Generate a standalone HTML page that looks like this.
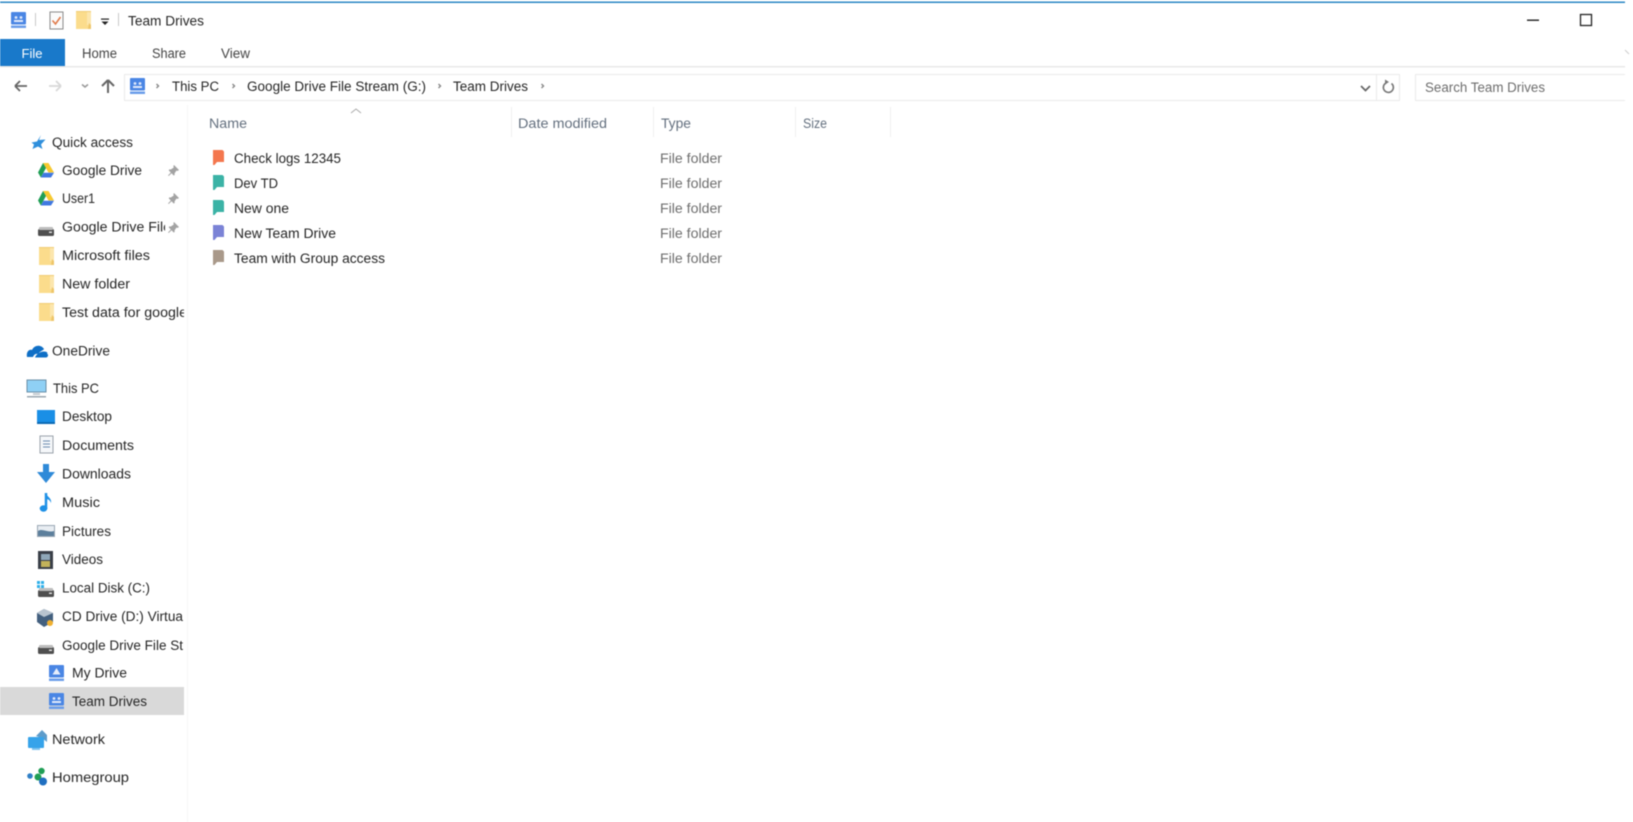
<!DOCTYPE html>
<html><head><meta charset="utf-8"><title>Team Drives</title>
<style>
html,body{margin:0;padding:0;background:#fff;width:1633px;height:822px;overflow:hidden}
svg{display:block;filter:blur(.45px)}
text{font-family:"Liberation Sans",sans-serif;font-size:13.5px;fill:#262626}
.h{fill:#64707f}.g{fill:#6e6e6e}.r{fill:#444}
</style></head><body>
<svg width="1633" height="822" viewBox="0 0 1633 822" xmlns="http://www.w3.org/2000/svg">
<defs>
<g id="td"><rect x="0" y="0" width="15" height="12.5" rx="1" fill="#4a86e4"/><rect x="0" y="13.5" width="15" height="2.5" fill="#6c9eea"/><circle cx="5" cy="5.5" r="1.4" fill="#dfe9fb"/><circle cx="10" cy="5.5" r="1.4" fill="#dfe9fb"/><rect x="3" y="8" width="9" height="2" fill="#dfe9fb"/></g>
<g id="md"><rect x="0" y="0" width="15" height="12.5" rx="1" fill="#4a86e4"/><rect x="0" y="13.5" width="15" height="2.5" fill="#6c9eea"/><path d="M7.5 3L11.5 9.5H3.5Z" fill="#e6eefc"/></g>
<g id="fd"><rect x="0" y="0" width="15" height="18" fill="#fbdc8c"/><path d="M11 0H13L15 2V14H11Z" fill="#fce6ad"/><path d="M13 12L15 14V18H12Z" fill="#eec66a"/><rect x="0" y="0" width="15" height="1" fill="#f0cd75"/></g>
<g id="gd"><path d="M5 0H10.500L16 9.500H10.500Z" fill="#f7c92f"/><path d="M5 0L0 9.500L2.800 14.500L8 5Z" fill="#1f9e55"/><path d="M5.500 9.800H16L13 14.500H2.800Z" fill="#3f78e0"/></g>
<g id="dr"><rect x="0" y="2" width="16" height="7" rx="1.500" fill="#4f4f4f"/><rect x="1" y="0" width="14" height="3" rx="1" fill="#bdbdbd"/><rect x="11" y="4.500" width="3" height="1.500" fill="#ddd"/></g>
<g id="pin"><path d="M6 0L11 5L9.500 6L8.500 5.500L6.500 8.500L6.700 10L5.600 10.500L3.600 8.200L0.700 11L0 10.500L2.800 7.500L0.800 5.500L1.200 4.400L2.800 4.500L5.800 2.500L5.300 1.300Z" fill="#a3a3a3"/></g>
<path id="bm" d="M0 0H9.500L11 1.500V12H4L1.500 15H0Z"/>
</defs>

<rect width="1633" height="822" fill="#fff"/>
<rect x="0" y="1.500" width="1625" height="1.500" fill="#2b87c4"/>

<!-- title bar -->
<use href="#td" x="11" y="12"/>
<rect x="35" y="13" width="1" height="13" fill="#c8c8c8"/>
<rect x="50" y="12" width="13" height="17" fill="#fbfbfb" stroke="#8a8a8a"/>
<path d="M52.500 20.500L55.500 24L60.500 17" fill="none" stroke="#e07a4a" stroke-width="1.600"/>
<use href="#fd" x="76" y="11"/>
<rect x="101" y="18.500" width="8" height="1.200" fill="#222"/>
<path d="M101.500 21.500H108.500L105 25Z" fill="#222"/>
<rect x="118" y="13" width="1" height="13" fill="#c8c8c8"/>
<text x="128" y="25.500" textLength="76" lengthAdjust="spacingAndGlyphs">Team Drives</text>
<rect x="1527" y="19.500" width="12" height="1.400" fill="#222"/>
<rect x="1580.500" y="14.500" width="11" height="11" fill="none" stroke="#222" stroke-width="1.300"/>
<path d="M1625 50L1629 54" stroke="#ccc"/>

<!-- ribbon -->
<rect x="0" y="39" width="65" height="27" fill="#1979ca"/>
<text x="21.500" y="58" textLength="21" lengthAdjust="spacingAndGlyphs" style="fill:#fff;font-size:13px">File</text>
<text x="82" y="58" textLength="35" lengthAdjust="spacingAndGlyphs" class="r">Home</text>
<text x="152" y="58" textLength="34" lengthAdjust="spacingAndGlyphs" class="r">Share</text>
<text x="221" y="58" textLength="29" lengthAdjust="spacingAndGlyphs" class="r">View</text>
<rect x="0" y="66" width="1625" height="1.500" fill="#e8e8e8"/>

<!-- nav -->
<path d="M15 86H27M15 86L20 81M15 86L20 91" fill="none" stroke="#666" stroke-width="1.800"/>
<path d="M49 86H61M61 86L56 81M61 86L56 91" fill="none" stroke="#d8d8d8" stroke-width="1.800"/>
<path d="M82 84.500L85 87L88 84.500" fill="none" stroke="#999" stroke-width="1.500"/>
<path d="M108 93V81M108 80L102 86M108 80L114 86" fill="none" stroke="#666" stroke-width="2"/>
<rect x="124.500" y="74.500" width="1275" height="26" fill="#fff" stroke="#ebebeb"/>
<use href="#td" x="130" y="78"/>
<path d="M156.500 84L158.500 86L156.500 88" fill="none" stroke="#888" stroke-width="1.400"/>
<text x="172" y="91" textLength="47" lengthAdjust="spacingAndGlyphs">This PC</text>
<path d="M232.500 84L234.500 86L232.500 88" fill="none" stroke="#888" stroke-width="1.400"/>
<text x="247" y="91" textLength="179" lengthAdjust="spacingAndGlyphs">Google Drive File Stream (G:)</text>
<path d="M438.500 84L440.500 86L438.500 88" fill="none" stroke="#888" stroke-width="1.400"/>
<text x="453" y="91" textLength="75" lengthAdjust="spacingAndGlyphs">Team Drives</text>
<path d="M541.500 84L543.500 86L541.500 88" fill="none" stroke="#888" stroke-width="1.400"/>
<path d="M1361 86L1365.500 90.500L1370 86" fill="none" stroke="#666" stroke-width="1.700"/>
<rect x="1376" y="75" width="1" height="25" fill="#ebebeb"/>
<path d="M1391.500 83.500A5 5 0 1 1 1386 83" fill="none" stroke="#777" stroke-width="1.600"/>
<path d="M1385 79.500V84.500L1389 82Z" fill="#777"/>
<path d="M1625 74.500H1415.500V100.500H1625" fill="#fff" stroke="#ebebeb"/>
<text x="1425" y="92" textLength="120" lengthAdjust="spacingAndGlyphs" class="g">Search Team Drives</text>

<!-- headers -->
<path d="M351 113L356 109L361 113" fill="none" stroke="#aaa"/>
<g fill="#f0f0f0"><rect x="187" y="107" width="1" height="30"/><rect x="511" y="107" width="1" height="30"/><rect x="653" y="107" width="1" height="30"/><rect x="795" y="107" width="1" height="30"/><rect x="890" y="107" width="1" height="30"/></g>
<text x="209" y="128" textLength="38" lengthAdjust="spacingAndGlyphs" class="h">Name</text>
<text x="518" y="128" textLength="89" lengthAdjust="spacingAndGlyphs" class="h">Date modified</text>
<text x="661" y="128" textLength="30" lengthAdjust="spacingAndGlyphs" class="h">Type</text>
<text x="803" y="128" style="font-size:14px" textLength="24" lengthAdjust="spacingAndGlyphs" class="h">Size</text>

<!-- files -->
<use href="#bm" x="213" y="150" fill="#f4774e"/>
<use href="#bm" x="213" y="175" fill="#3bb3a6"/>
<use href="#bm" x="213" y="200" fill="#3bb3a6"/>
<use href="#bm" x="213" y="225" fill="#7b83d6"/>
<use href="#bm" x="213" y="250" fill="#a9998a"/>
<text x="234" y="163" textLength="107" lengthAdjust="spacingAndGlyphs">Check logs 12345</text>
<text x="234" y="188" textLength="44" lengthAdjust="spacingAndGlyphs">Dev TD</text>
<text x="234" y="213" textLength="55" lengthAdjust="spacingAndGlyphs">New one</text>
<text x="234" y="238" textLength="102" lengthAdjust="spacingAndGlyphs">New Team Drive</text>
<text x="234" y="263" textLength="151" lengthAdjust="spacingAndGlyphs">Team with Group access</text>
<text x="660" y="163" textLength="62" lengthAdjust="spacingAndGlyphs" class="g">File folder</text>
<text x="660" y="188" textLength="62" lengthAdjust="spacingAndGlyphs" class="g">File folder</text>
<text x="660" y="213" textLength="62" lengthAdjust="spacingAndGlyphs" class="g">File folder</text>
<text x="660" y="238" textLength="62" lengthAdjust="spacingAndGlyphs" class="g">File folder</text>
<text x="660" y="263" textLength="62" lengthAdjust="spacingAndGlyphs" class="g">File folder</text>

<!-- sidebar -->
<rect x="187" y="105" width="1" height="717" fill="#f6f6f6"/>
<rect x="0" y="687" width="184" height="28" fill="#d9d9d9"/>

<path d="M41 135L39 140L45.500 139.500L41 144.500L42.500 149L38 146.500L32.500 149L34 144.500L31.500 142.500L37 141.500Z" fill="#2f8fdc"/>
<text x="52" y="147" textLength="81" lengthAdjust="spacingAndGlyphs">Quick access</text>

<use href="#gd" x="38" y="163"/>
<text x="62" y="175" textLength="80" lengthAdjust="spacingAndGlyphs">Google Drive</text>
<use href="#pin" x="168" y="165"/>
<use href="#gd" x="38" y="191"/>
<text x="62" y="203" style="font-size:14px" textLength="33" lengthAdjust="spacingAndGlyphs">User1</text>
<use href="#pin" x="168" y="193"/>
<use href="#dr" x="38" y="227"/>
<text x="62" y="231.500" textLength="109" lengthAdjust="spacingAndGlyphs">Google Drive File</text>
<rect x="165" y="218" width="20" height="18" fill="#fff"/>
<use href="#pin" x="168" y="222"/>
<use href="#fd" x="39" y="247"/>
<text x="62" y="260" textLength="88" lengthAdjust="spacingAndGlyphs">Microsoft files</text>
<use href="#fd" x="39" y="275"/>
<text x="62" y="288.500" textLength="68" lengthAdjust="spacingAndGlyphs">New folder</text>
<use href="#fd" x="39" y="303"/>
<text x="62" y="317" textLength="125" lengthAdjust="spacingAndGlyphs">Test data for google</text>
<rect x="184" y="303" width="3" height="20" fill="#fff"/>

<path d="M27 357C26 352 29 349 32 350C34 345 41 344 44 349C44 350 40 351 38 354C35 353.500 34 355 33 357ZM35 357.500C36 354.500 40 351.500 44 351.500C47 351.500 48 353 47 354C49 354 48 357.500 46 357.500Z" fill="#0f6fc6"/>
<text x="52" y="355.500" textLength="58" lengthAdjust="spacingAndGlyphs">OneDrive</text>

<rect x="27" y="380" width="19" height="12" fill="#8fd0f5" stroke="#6a8fa8"/>
<rect x="27" y="396" width="19" height="1.500" fill="#9aa7b0"/>
<rect x="33" y="393" width="7" height="2" fill="#c5ccd1"/>
<text x="53" y="393" style="font-size:14px" textLength="46" lengthAdjust="spacingAndGlyphs">This PC</text>

<rect x="37" y="410" width="18" height="14" fill="#1a8fe6"/>
<rect x="37" y="422" width="18" height="2" fill="#0c6ab5"/>
<text x="62" y="421" textLength="50" lengthAdjust="spacingAndGlyphs">Desktop</text>

<rect x="40" y="436" width="13" height="17" fill="#f5f7fa" stroke="#9aa2aa"/>
<path d="M43 441H50M43 444H50M43 447H50" stroke="#6a8db0"/>
<text x="62" y="450" textLength="72" lengthAdjust="spacingAndGlyphs">Documents</text>

<path d="M43 464H49V472H55L46 483L37 472H43Z" fill="#2f8ad8"/>
<text x="62" y="478.500" textLength="69" lengthAdjust="spacingAndGlyphs">Downloads</text>

<path d="M46 493V509" stroke="#1e90e6" stroke-width="2.500"/>
<ellipse cx="43.500" cy="508.500" rx="3.800" ry="3.200" fill="#1e90e6"/>
<path d="M46 493C47 497 52 498 51 503C50 500 48 499 46 499Z" fill="#1e90e6"/>
<text x="62" y="507" textLength="38" lengthAdjust="spacingAndGlyphs">Music</text>

<rect x="37.500" y="525.500" width="17" height="11" fill="#e8edf2" stroke="#9aa7b4"/>
<path d="M38 531C42 528 48 533 54 531V536H38Z" fill="#5c7f9c"/>
<text x="62" y="536" textLength="49" lengthAdjust="spacingAndGlyphs">Pictures</text>

<rect x="38" y="551" width="15" height="18" fill="#3a3f48"/>
<rect x="41" y="554" width="9" height="6" fill="#8fa7b8"/>
<rect x="41" y="561" width="9" height="6" fill="#c2b25a"/>
<text x="62" y="564" textLength="41" lengthAdjust="spacingAndGlyphs">Videos</text>

<g fill="#2fb0ea"><rect x="37" y="581" width="3" height="3"/><rect x="41" y="581" width="3" height="3"/><rect x="37" y="585" width="3" height="3"/><rect x="41" y="585" width="3" height="3"/></g>
<use href="#dr" x="38" y="588"/>
<text x="62" y="592.700" textLength="88" lengthAdjust="spacingAndGlyphs">Local Disk (C:)</text>

<path d="M44 609L53 613V622L44 627L37 622V613Z" fill="#43607f"/>
<path d="M44 609L53 613L44 617L37 613Z" fill="#b8c4d0"/>
<circle cx="50" cy="623" r="3" fill="#f0b030"/>
<text x="62" y="621" textLength="121" lengthAdjust="spacingAndGlyphs">CD Drive (D:) Virtua</text>

<use href="#dr" x="38" y="645"/>
<text x="62" y="650" textLength="121" lengthAdjust="spacingAndGlyphs">Google Drive File St</text>

<use href="#md" x="49" y="665"/>
<text x="72" y="677.700" textLength="55" lengthAdjust="spacingAndGlyphs">My Drive</text>
<use href="#td" x="49" y="693"/>
<text x="72" y="706" textLength="75" lengthAdjust="spacingAndGlyphs">Team Drives</text>

<path d="M36 736L42 730L47 735V742L42 738Z" fill="#5d9ccb"/>
<rect x="28" y="737" width="16" height="11" rx="1" fill="#36a3ea"/>
<rect x="32" y="748" width="8" height="2" fill="#7fc3ee"/>
<text x="52" y="744" textLength="53" lengthAdjust="spacingAndGlyphs">Network</text>

<circle cx="30" cy="776" r="2.800" fill="#2f7fc6"/>
<circle cx="41.500" cy="771" r="3.200" fill="#1f9e55"/>
<circle cx="38" cy="777" r="3.500" fill="#1f9e55"/>
<circle cx="43" cy="781.500" r="4" fill="#1f6fc0"/>
<text x="52" y="782" textLength="77" lengthAdjust="spacingAndGlyphs">Homegroup</text>
</svg>
</body></html>
